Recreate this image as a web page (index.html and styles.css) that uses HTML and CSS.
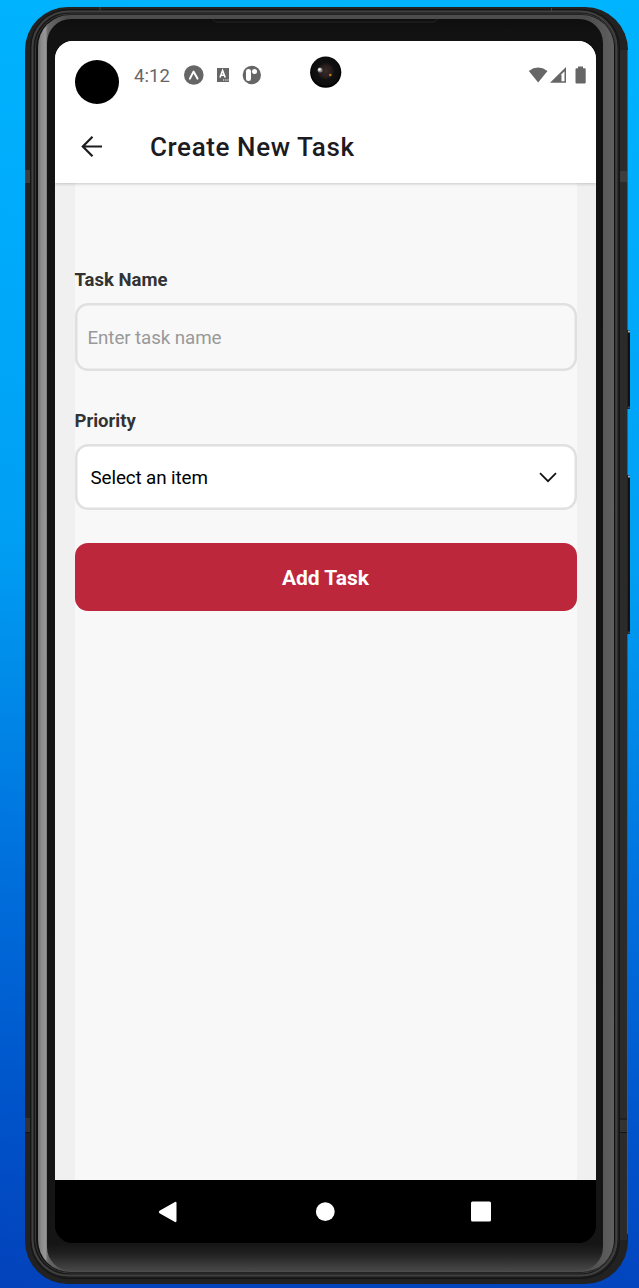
FILE: index.html
```html
<!DOCTYPE html>
<html lang="en">
<head>
<meta charset="utf-8">
<title>Create New Task</title>
<link rel="stylesheet" href="styles.css">
</head>
<body>
<div class="phone">
  <svg class="frame" width="639" height="1288" viewBox="0 0 639 1288" aria-hidden="true">
    <defs>
      <linearGradient id="band" gradientUnits="userSpaceOnUse" x1="38" y1="0" x2="614" y2="0">
        <stop offset="0" stop-color="#707070"/><stop offset=".006" stop-color="#8c8c8c"/>
        <stop offset=".013" stop-color="#969696"/><stop offset=".017" stop-color="#686868"/>
        <stop offset=".05" stop-color="#4c4c4c"/><stop offset=".95" stop-color="#4c4c4c"/>
        <stop offset="1" stop-color="#606060"/>
      </linearGradient>
      <linearGradient id="glass" x1="0" y1="0" x2="0" y2="1">
        <stop offset="0" stop-color="#0e0e0e"/><stop offset=".01" stop-color="#121212"/>
        <stop offset=".978" stop-color="#151515"/><stop offset=".986" stop-color="#202020"/>
        <stop offset="1" stop-color="#484848"/>
      </linearGradient>
      <radialGradient id="lens" cx=".5" cy=".47" r=".5">
        <stop offset="0" stop-color="#3a2c2b"/><stop offset=".42" stop-color="#241c1b"/>
        <stop offset=".55" stop-color="#101010"/><stop offset=".88" stop-color="#0d0d0d"/>
        <stop offset="1" stop-color="#000"/>
      </radialGradient>
    </defs>
    <g fill="#111">
      <rect x="625" y="330" width="5" height="79"/><rect x="625" y="475" width="5" height="159"/>
    </g>
    <path d="M627 331.500h3M627 476.500h3" stroke="#aaa" stroke-width="2"/>
    <path d="M627 407.500h3M627 632.500h3" stroke="#444" stroke-width="2"/>
    <rect x="25" y="7" width="603" height="1277" rx="43" fill="#222"/>
    <rect x="620" y="50" width="7" height="1190" fill="#2b2b2b"/>
    <path d="M627.500 50v280M627.500 409v66M627.500 634v600" stroke="#555"/>
    <path d="M25 170h5v13h-5zM620 171h7v11h-7z" fill="#3d3d3d"/>
    <path d="M25 1118h5v14h-5zM620 1119h7v13h-7z" fill="#333"/>
    <path d="M25 1132.500h5M620 1132.500h7M620 1119h7" stroke="#151515"/>
    <rect x="30.500" y="9.500" width="589" height="1269" rx="38" fill="#1c1c1c" stroke="#141414"/>
    <rect x="32.500" y="11.500" width="584" height="1264" rx="36" fill="#181818" stroke="#404040" stroke-width="2"/>
    <rect x="35.500" y="14" width="580" height="1259" rx="34" fill="#111" stroke="#383838"/>
    <rect x="38" y="15" width="576" height="1257" rx="32" fill="url(#band)"/>
    <rect x="47" y="19" width="556" height="1252" rx="24" fill="url(#glass)"/>
    <path d="M212.500 19l3 3H434l4-3" fill="none" stroke="#242424"/>
    <path d="M100 7v3.500M551.500 8v3.500" stroke="#444"/>
  </svg>
  <main class="screen">
    <div class="statusbar">
      <span class="cutout"></span>
      <span class="time">4:12</span>
      <svg class="notices" width="78" height="20" viewBox="0 0 78 20" aria-hidden="true">
        <circle cx="9.800" cy="10" r="9.800" fill="#666"/>
        <path d="M5.900 13.600L9.500 6.600L13.500 13.600" fill="none" stroke="#fff" stroke-width="2" stroke-linejoin="round" stroke-linecap="round"/>
        <path d="M33 3h12v14H33z" fill="#666"/>
        <path d="M36 12.500l2.600-7L41.200 12.500M37 10.200h3.400" fill="none" stroke="#fff" stroke-width="1.600"/>
        <path d="M39 15h1.200M41.200 15h1.200M43.300 15h1.200" stroke="#fff" stroke-width="1.200"/>
        <circle cx="67.800" cy="10" r="9.200" fill="#666"/>
        <rect x="62" y="4" width="5" height="12" rx="2.300" fill="#fff"/>
        <circle cx="70.500" cy="6.500" r="2.500" fill="#fff"/>
      </svg>
      <svg class="system" width="60" height="20" viewBox="0 0 60 20" aria-hidden="true">
        <path d="M.8 4.900Q10 -1.800 19.500 4.900L10.200 16.600z" fill="#666"/>
        <path d="M22 16.800L38 1v15.800z" fill="#666"/><path d="M33.500 8.200L36.500 5.200v10H33.500z" fill="#fff"/>
        <path d="M50 .5h5v1.700h1.700q1 0 1 1v13.300q0 1-1 1h-8.200q-1 0-1-1V3.200q0-1 1-1H50z" fill="#666"/>
      </svg>
      <svg class="camera" width="32" height="32" viewBox="0 0 32 32" aria-hidden="true">
        <circle cx="15.700" cy="16.200" r="15.600" fill="url(#lens)"/>
        <circle cx="10" cy="14" r="2.500" fill="#8b8582"/><circle cx="9.500" cy="13.500" r="1.300" fill="#fff"/>
        <circle cx="20.300" cy="19" r="1.300" fill="#c77422"/>
      </svg>
    </div>
    <header class="appbar">
      <svg width="22" height="22" viewBox="0 0 22 22" aria-label="Back"><path d="M21 10.500H2M11.500 .8L1.800 10.500L11.500 20.200" fill="none" stroke="#1c1b1f" stroke-width="2.200"/></svg>
      <h1>Create New Task</h1>
    </header>
    <section class="form">
      <label class="label">Task Name</label>
      <div class="field name">Enter task name</div>
      <label class="label">Priority</label>
      <div class="field select"><span>Select an item</span>
        <svg width="18" height="11" viewBox="0 0 18 11" aria-hidden="true"><path d="M1 1.200L9 9.200L17 1.200" fill="none" stroke="#111" stroke-width="1.700"/></svg>
      </div>
      <button class="submit">Add Task</button>
    </section>
    <nav class="nav">
      <svg width="20" height="22" viewBox="0 0 20 22"><path d="M1.500 9.800L17 1q1.500-.6 1.500 1v18q0 1.600-1.500 1L1.500 12.200q-1.500-1.200 0-2.400z" fill="#fff"/></svg>
      <svg width="20" height="22" viewBox="0 0 20 22"><circle cx="10.300" cy="10.700" r="9.400" fill="#fff"/></svg>
      <svg width="20" height="22" viewBox="0 0 20 22"><rect y=".5" width="20" height="20" rx="1.500" fill="#fff"/></svg>
    </nav>
  </main>
</div>
</body>
</html>
```
FILE: styles.css
```css
* { box-sizing: border-box; }
body {
  margin: 0;
  height: 1288px;
  overflow: hidden;
  font-family: Roboto, "Liberation Sans", sans-serif;
  background: linear-gradient(183deg, #00b4fe 0%, #00aafb 22%, #009ff4 43%, #008be9 54%, #0070dd 68%, #0052c9 87%, #0342bb 100%);
}
.phone { position: relative; width: 639px; height: 1288px; padding: 41px 43px 45px 55px; }
.frame { position: absolute; left: 0; top: 0; }
.screen {
  position: relative;
  display: flex;
  flex-direction: column;
  width: 541px;
  height: 1202px;
  border-radius: 18px;
  overflow: hidden;
  background: linear-gradient(#f0f0f0 1139px, #000 1139px);
}
.statusbar { position: relative; z-index: 2; display: flex; height: 70px; padding: 19px 8px 0 20px; background: #fff; }
.cutout { width: 44px; height: 44px; border-radius: 50%; background: #000; }
.time { margin: 4px 0 0 15px; width: 50px; font-size: 18.5px; line-height: 24px; letter-spacing: .1px; color: #666; }
.notices { margin-top: 5px; }
.system { margin: 6px 0 0 auto; }
.camera { position: absolute; left: 255px; top: 15px; }
.appbar {
  position: relative;
  display: flex;
  align-items: center;
  gap: 47px;
  height: 72px;
  padding: 0 26px;
  background: #fff;
  box-shadow: 0 1px 3px rgba(0, 0, 0, .2);
}
.appbar h1 { margin: 0; font-size: 26px; line-height: 32px; font-weight: 500; letter-spacing: .6px; color: #1c1b1f; }
.form { display: flex; flex-direction: column; flex: 1; margin: 0 19.5px; padding-top: 85px; background: #f8f8f8; }
.label { font-size: 18.5px; line-height: 24px; font-weight: 700; color: #333; }
.field {
  display: flex;
  align-items: center;
  justify-content: space-between;
  border-radius: 13px;
  box-shadow: inset 0 0 0 2.5px #e0e0e0;
  font-size: 18.8px;
  letter-spacing: -.1px;
}
.name { height: 68px; margin: 11px 0 38px; padding: 2px 13px 0; color: #999; }
.select { height: 66px; margin: 11px 0 33px; padding: 2px 20px 0 16px; background: #fff; color: #000; }
.select svg { margin-top: -2px; }
.submit { height: 68px; padding: 2px 0 0; border: 0; border-radius: 13px; background: #bd273b; color: #fff; font: 700 21px/28px Roboto, sans-serif; }
.nav { display: flex; align-items: center; justify-content: space-between; height: 63px; padding: 0 105px 0 103px; background: #000; }
```
